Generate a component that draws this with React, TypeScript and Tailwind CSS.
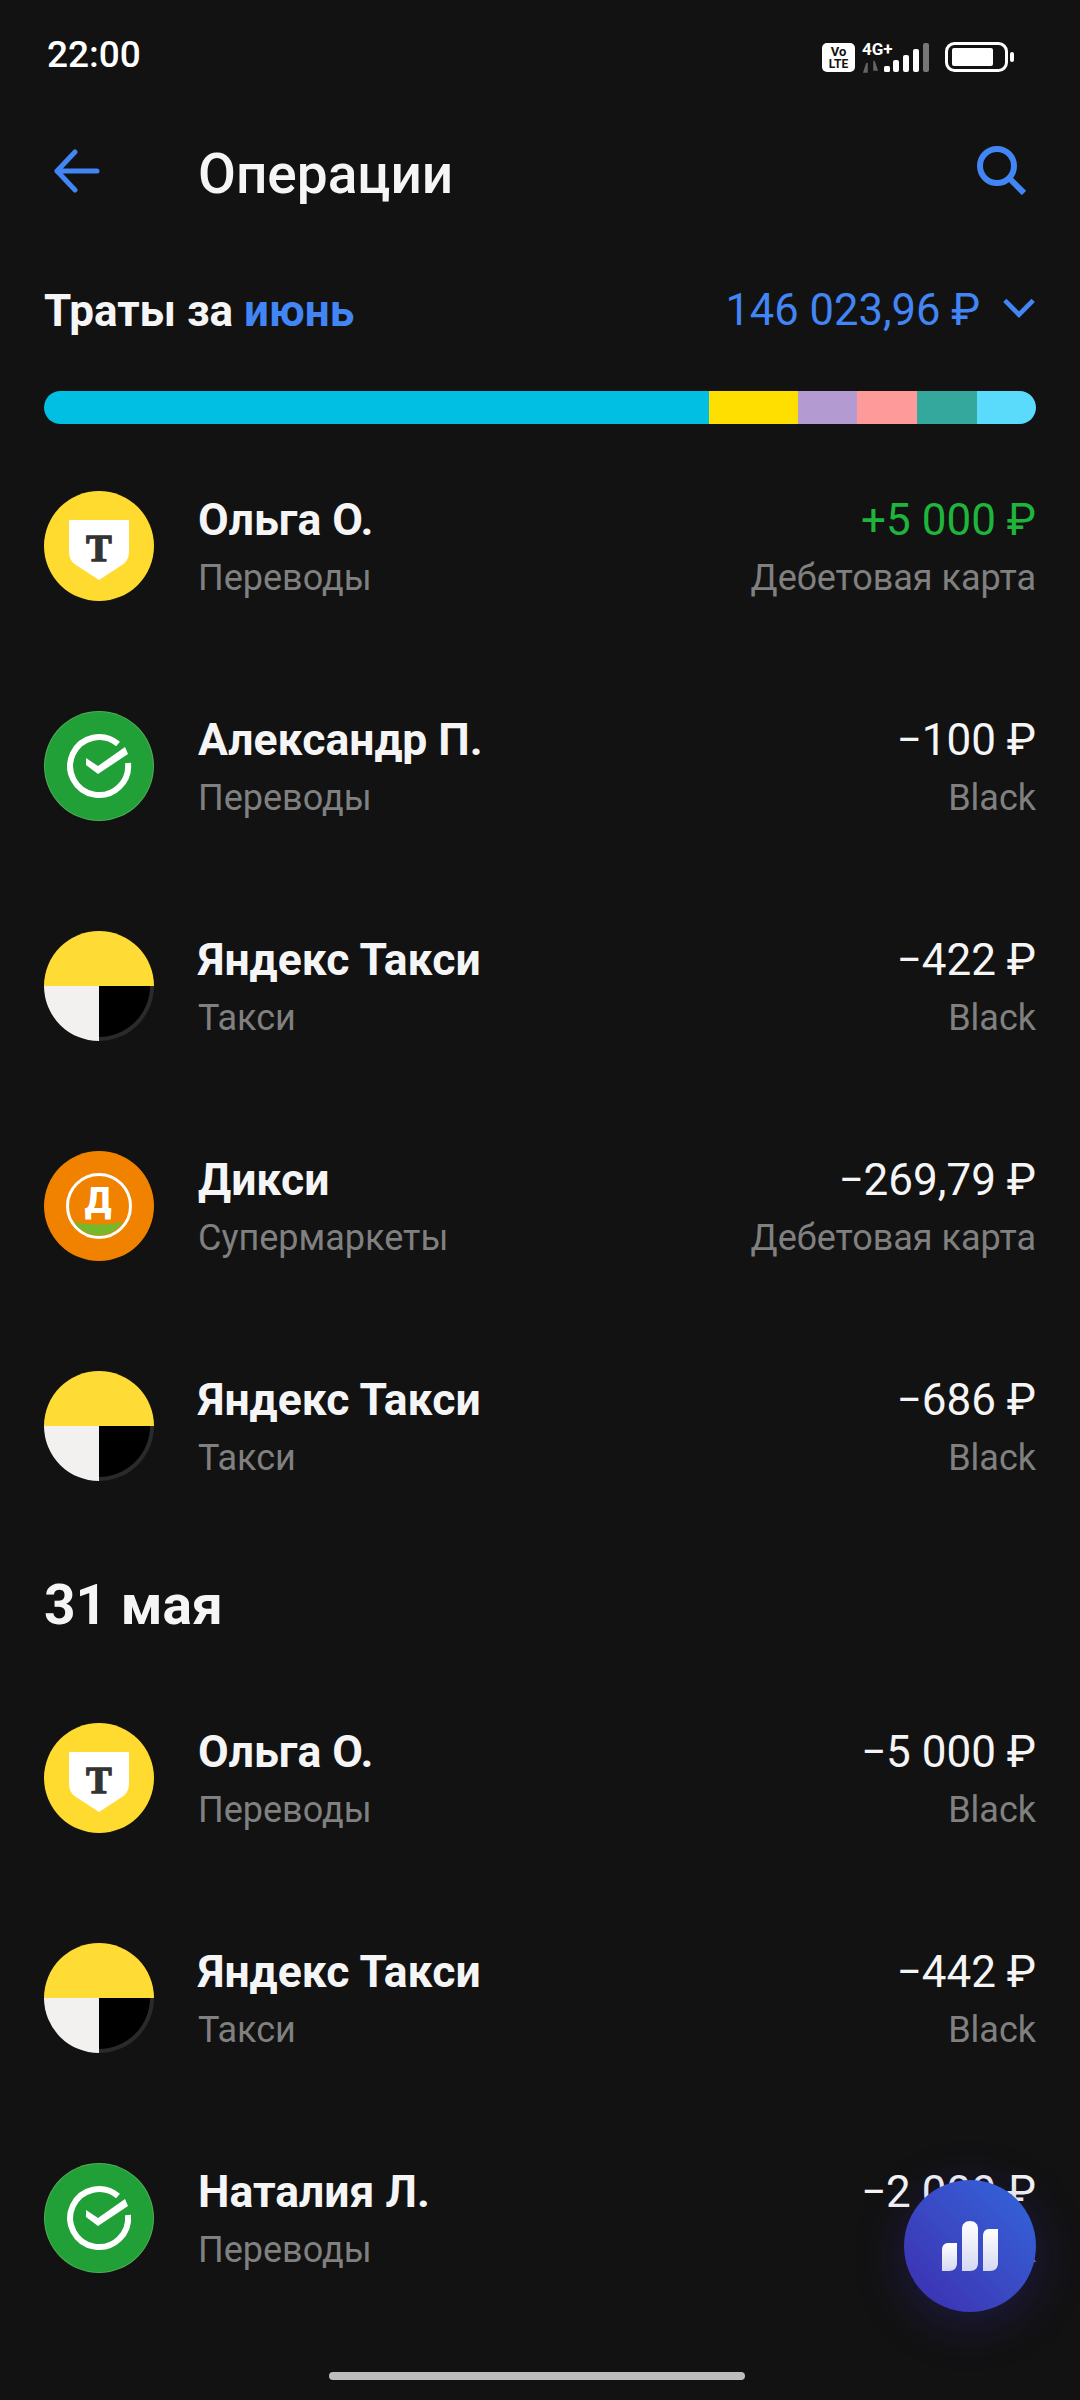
import React from 'react'

type Kind = 'tinkoff' | 'sber' | 'yandex' | 'dixy'

type Operation = {
	name: string
	category: string
	amount: string
	account: string
	icon: Kind
	income?: boolean
}

const juneOps: Operation[] = [
	{ name: 'Ольга О.', category: 'Переводы', amount: '+5 000 ₽', account: 'Дебетовая карта', icon: 'tinkoff', income: true },
	{ name: 'Александр П.', category: 'Переводы', amount: '−100 ₽', account: 'Black', icon: 'sber' },
	{ name: 'Яндекс Такси', category: 'Такси', amount: '−422 ₽', account: 'Black', icon: 'yandex' },
	{ name: 'Дикси', category: 'Супермаркеты', amount: '−269,79 ₽', account: 'Дебетовая карта', icon: 'dixy' },
	{ name: 'Яндекс Такси', category: 'Такси', amount: '−686 ₽', account: 'Black', icon: 'yandex' },
]

const mayOps: Operation[] = [
	{ name: 'Ольга О.', category: 'Переводы', amount: '−5 000 ₽', account: 'Black', icon: 'tinkoff' },
	{ name: 'Яндекс Такси', category: 'Такси', amount: '−442 ₽', account: 'Black', icon: 'yandex' },
	{ name: 'Наталия Л.', category: 'Переводы', amount: '−2 000 ₽', account: 'Black', icon: 'sber' },
]

function StatusIcons() {
	return (
		<svg width="200" height="45" viewBox="820 30 200 45" fill="none">
			<rect x="822" y="40" width="33" height="29" rx="5" fill="#fff" />
			<text x="838.5" y="53" textAnchor="middle" fontSize="13" fontWeight="700" fill="#121212" fontFamily="Roboto, sans-serif">Vo</text>
			<text x="838.5" y="65" textAnchor="middle" fontSize="12" fontWeight="700" fill="#121212" fontFamily="Roboto, sans-serif">LTE</text>
			<text x="862" y="52" fontSize="17" fontWeight="700" fill="#fff" fontFamily="Roboto, sans-serif">4G+</text>
			<path d="M867 60v9h-3zM874 58v9h3z" fill="#666" stroke="#666" strokeWidth="1.5" />
			<rect x="884" y="63" width="6" height="6" rx="1.5" fill="#fff" />
			<rect x="893" y="57" width="6" height="12" rx="2" fill="#fff" />
			<rect x="903" y="52" width="6" height="17" rx="2" fill="#fff" />
			<rect x="913" y="46" width="6" height="23" rx="2" fill="#fff" />
			<rect x="923" y="40" width="6" height="29" rx="2" fill="#777" />
			<rect x="946.5" y="40.5" width="60" height="27" rx="8" stroke="#fff" strokeWidth="3" />
			<rect x="952" y="45" width="41" height="18" rx="2" fill="#fff" />
			<rect x="1010" y="49" width="4" height="10" rx="2" fill="#fff" />
		</svg>
	)
}

function OpIcon({ kind }: { kind: Kind }) {
	if (kind === 'tinkoff') {
		return (
			<svg width="110" height="110" viewBox="0 0 110 110" className="shrink-0">
				<circle cx="55" cy="55" r="55" fill="#ffdb2f" />
				<path d="M25 29H85V60C85 66 83 71 78 74L55 89L32 74C27 71 25 66 25 60Z" fill="#fff" />
				<text x="55" y="70" textAnchor="middle" fontSize="38" fontWeight="700" fill="#333" stroke="#333" strokeWidth="1.5" fontFamily="'Liberation Serif', serif">Т</text>
			</svg>
		)
	}
	if (kind === 'sber') {
		return (
			<svg width="110" height="110" viewBox="0 0 110 110" className="shrink-0">
				<circle cx="55" cy="55" r="55" fill="#4fae55" />
				<circle cx="55" cy="55" r="54" fill="#21a038" />
				<path d="M74 33A29 29 0 1 0 84 52" stroke="#fff" strokeWidth="6" fill="none" />
				<path d="M42 47L54 55L81 36L84 43L54 63L42 54Z" fill="#fff" />
			</svg>
		)
	}
	if (kind === 'yandex') {
		return (
			<svg width="110" height="110" viewBox="0 0 110 110" className="shrink-0">
				<path d="M0 55A55 55 0 0 1 110 55Z" fill="#ffdb36" />
				<path d="M0 55H55V110A55 55 0 0 1 0 55Z" fill="#f2f1ef" />
				<path d="M55 55H110A55 55 0 0 1 55 110Z" fill="#2a2a2a" />
				<path d="M55 55H106A51 51 0 0 1 55 106Z" fill="#000" />
			</svg>
		)
	}
	return (
		<svg width="110" height="110" viewBox="0 0 110 110" className="shrink-0">
			<circle cx="55" cy="55" r="55" fill="#f08200" />
			<circle cx="55" cy="55" r="31.5" stroke="#fff" strokeWidth="3" fill="none" />
			<path d="M30 71Q55 76 79 71A29 29 0 0 1 30 71Z" fill="#76b82a" />
			<text x="54" y="62" textAnchor="middle" fontSize="36" fontWeight="900" fill="#fff" fontFamily="Roboto, sans-serif">Д</text>
		</svg>
	)
}

function OperationRow({ op }: { op: Operation }) {
	return (
		<div className="flex h-[220px] items-center px-[44px]">
			<OpIcon kind={op.icon} />
			<div className="ml-[44px] flex min-w-0 flex-1 flex-col pt-[6px]">
				<div className="flex items-center justify-between text-[44px] leading-[58px]">
					<span className="text-[44.5px] font-bold text-[#f5f5f6]">{op.name}</span>
					<span className={op.income ? 'text-[#1fb53c]' : 'text-[#f5f5f6]'}>{op.amount}</span>
				</div>
				<div className="flex items-center justify-between text-[36px] leading-[58px] text-[#808080]">
					<span>{op.category}</span>
					<span>{op.account}</span>
				</div>
			</div>
		</div>
	)
}

export default function App() {
	return (
		<div className="relative h-[2400px] w-[1080px] overflow-hidden bg-[#121212] font-['Roboto',sans-serif] text-white">
			{/* статус бар */}
			<div className="flex h-[110px] items-center justify-between pl-[47px] pr-[60px]">
				<span className="text-[37px] font-medium">22:00</span>
				<StatusIcons />
			</div>

			{/* заголовок */}
			<div className="flex h-[130px] items-center justify-between pl-[54px] pr-[54px]">
				<div className="flex items-center">
					<svg width="46" height="44" viewBox="0 0 46 44" fill="none" stroke="#4285f4" strokeWidth="5" strokeLinecap="round" strokeLinejoin="round" className="mb-[8px]">
						<path d="M3 22H43M21 3L3 22L21 41" />
					</svg>
					<h1 className="mb-[2px] ml-[98px] text-[55px] font-medium text-[#f5f5f6]">Операции</h1>
				</div>
				<svg width="50" height="50" viewBox="0 0 50 50" fill="none" stroke="#4285f4" strokeWidth="6" className="mb-[10px]">
					<circle cx="21" cy="21" r="17" />
					<path d="M33 33L48 48" />
				</svg>
			</div>

			{/* траты за месяц */}
			<div className="mt-[36px] flex h-[70px] items-center justify-between px-[44px]">
				<div className="text-[44px] font-bold text-[#f5f5f6]">
					Траты за <span className="text-[#4285f4]">июнь</span>
				</div>
				<div className="flex items-center gap-[22px] text-[43.5px] text-[#4285f4]">
					<span>146 023,96 ₽</span>
					<svg width="34" height="22" viewBox="0 0 36 22" fill="none" stroke="#4285f4" strokeWidth="5" className="mb-[6px]">
						<path d="M3 3L18 18L33 3" />
					</svg>
				</div>
			</div>

			<div className="mx-[44px] mt-[45px] flex h-[33px] overflow-hidden rounded-full">
				<div className="w-[665px] bg-[#00bfe3]" />
				<div className="w-[89px] bg-[#ffdf00]" />
				<div className="w-[59px] bg-[#b39ad0]" />
				<div className="w-[60px] bg-[#ff9a9a]" />
				<div className="w-[60px] bg-[#35a89d]" />
				<div className="flex-1 bg-[#5adbfb]" />
			</div>

			{/* список операций */}
			<div className="mt-[12px]">
				{juneOps.map((op, i) => (
					<OperationRow key={i} op={op} />
				))}
				<div className="flex h-[132px] items-center px-[44px] pt-[6px] text-[55px] font-bold text-[#f5f5f6]">31 мая</div>
				{mayOps.map((op, i) => (
					<OperationRow key={i} op={op} />
				))}
			</div>

			{/* кнопка аналитики */}
			<div className="absolute left-[904px] top-[2180px] flex h-[132px] w-[132px] items-center justify-center rounded-full bg-gradient-to-bl from-[#3066dc] to-[#3c2cae] shadow-[0_10px_50px_rgba(58,48,190,0.3)]">
				<svg width="56" height="50" viewBox="0 0 56 50">
					<defs>
						<linearGradient id="bars" x1="0" y1="0" x2="0" y2="1">
							<stop offset="0" stopColor="#ffffff" />
							<stop offset="1" stopColor="#d5d8f2" />
						</linearGradient>
					</defs>
					<path d="M0 50V29C0 25 2 22 6 22H15V42C15 47 12 50 7 50Z" fill="url(#bars)" />
					<path d="M20 50V8C20 3 23 0 28 0C33 0 36 3 36 8V42C36 47 33 50 28 50Z" fill="url(#bars)" />
					<path d="M41 50V15C41 11 43 8 47 8H56V42C56 47 53 50 48 50Z" fill="url(#bars)" />
				</svg>
			</div>

			{/* индикатор */}
			<div className="absolute bottom-[20px] left-[329px] h-[8px] w-[416px] rounded-full bg-[#bdbdbd]" />
		</div>
	)
}
